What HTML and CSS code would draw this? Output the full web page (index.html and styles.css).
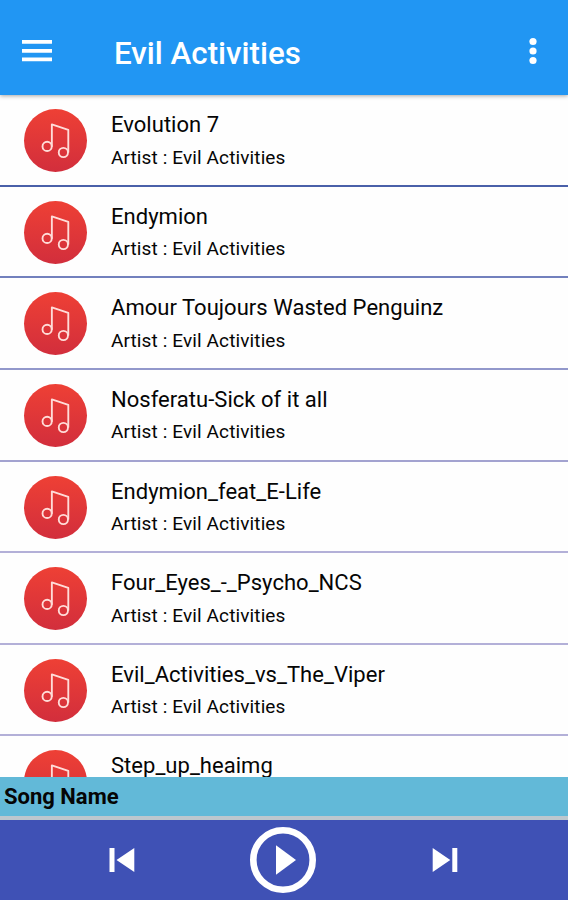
FILE: index.html
```html
<!DOCTYPE html>
<html lang="en">
<head>
    <meta charset="UTF-8">
    <meta name="viewport" content="width=device-width, initial-scale=1.0">
    <title>Evil Activities</title>
    <link rel="stylesheet" href="styles.css">
</head>
<body>
    <svg class="defs" width="0" height="0">
        <symbol id="note" viewBox="0 0 64 64">
            <g fill="none" stroke="#ffdcd8" stroke-width="1.9" stroke-linejoin="round">
                <circle cx="23.5" cy="38" r="4.7"/>
                <circle cx="40" cy="44.2" r="4.7"/>
                <path d="M28.3 38.3V15.6L45 21.3V44.2"/>
            </g>
        </symbol>
    </svg>
    <div class="app">
        <header class="toolbar">
            <svg class="menu" width="30" height="22" viewBox="0 0 30 22">
                <path d="M0 1.9h30M0 10.9h30M0 19.4h30" stroke="#fff" stroke-width="3.6"/>
            </svg>
            <h1>Evil Activities</h1>
            <svg class="more" width="8" height="28" viewBox="0 0 8 28" fill="#fff">
                <circle cx="4" cy="4.5" r="3.6"/>
                <circle cx="4" cy="14" r="3.6"/>
                <circle cx="4" cy="23.5" r="3.6"/>
            </svg>
        </header>
        <ul class="songs" id="songs"></ul>
        <div class="song-name">Song Name</div>
        <footer class="player">
            <svg class="prev" width="26" height="26" viewBox="0 0 26 26" fill="#fff">
                <path d="M0.5 1h5v24h-5zM25.3 1v24L7.5 13z"/>
            </svg>
            <svg class="play" width="68" height="68" viewBox="0 0 68 68">
                <circle cx="34" cy="34" r="29.7" fill="none" stroke="#fff" stroke-width="6.6"/>
                <path d="M27 19.2v29.6L47 34z" fill="#fff"/>
            </svg>
            <svg class="next" width="26" height="26" viewBox="0 0 26 26" fill="#fff">
                <path d="M20.3 1h5v24h-5zM0.7 1v24L18.3 13z"/>
            </svg>
        </footer>
    </div>
    <script>
        const songs = [
            'Evolution 7',
            'Endymion',
            'Amour Toujours Wasted Penguinz',
            'Nosferatu-Sick of it all',
            'Endymion_feat_E-Life',
            'Four_Eyes_-_Psycho_NCS',
            'Evil_Activities_vs_The_Viper',
            'Step_up_heaimg'
        ];
        document.getElementById('songs').innerHTML = songs.map((song, index) => `
            <li class="song">
                <svg class="cover"><use href="#note"/></svg>
                <div>
                    <div class="title">${song}</div>
                    ${index < songs.length - 1 ? '<div class="artist">Artist : Evil Activities</div>' : ''}
                </div>
            </li>
        `).join('');
    </script>
</body>
</html>
```
FILE: styles.css
```css
* {
    box-sizing: border-box;
}
body {
    margin: 0;
    font-family: Roboto, sans-serif;
    background: #fefefe;
    color: #050505;
}
.defs {
    display: none;
}
.app {
    display: flex;
    flex-direction: column;
    height: 900px;
    overflow: hidden;
}
.toolbar {
    display: flex;
    flex-shrink: 0;
    align-items: center;
    height: 95px;
    padding: 7px 31px 0 22px;
    background: #2196f3;
    box-shadow: 0 1px 4px rgba(0, 0, 0, 0.35);
    z-index: 1;
}
.menu {
    margin-top: -1px;
}
h1 {
    flex: 1;
    margin: 5px 0 0 62px;
    font-size: 31.3px;
    font-weight: 500;
    line-height: 36px;
    color: #fff;
}
.songs {
    flex: 1;
    min-height: 0;
    margin: 0;
    padding: 0;
    overflow: hidden;
    list-style: none;
}
.song {
    display: flex;
    height: 91.65px;
    padding: 14px 24px 0;
    border-bottom: 2px solid #b3b0d8;
}
.song:nth-child(1) {
    border-color: #4a60a9;
}
.song:nth-child(2) {
    border-color: #7280bd;
}
.song:nth-child(3) {
    border-color: #9298cb;
}
.song:nth-child(4) {
    border-color: #a3a3d0;
}
.cover {
    flex-shrink: 0;
    width: 63px;
    height: 63px;
    margin-right: 24px;
    border-radius: 50%;
    background: linear-gradient(#ee4035, #d22e3c);
}
.title {
    margin-top: 3px;
    font-size: 22px;
    line-height: 26px;
    letter-spacing: 0.03px;
    white-space: nowrap;
}
.artist {
    margin-top: 8.5px;
    font-size: 19px;
    line-height: 22px;
    letter-spacing: 0.12px;
}
.song-name {
    flex-shrink: 0;
    height: 43px;
    padding-left: 4px;
    border-bottom: 4px solid #bcc7ce;
    background: #62b9d8;
    font-size: 22px;
    font-weight: 700;
    line-height: 39px;
}
.player {
    display: flex;
    flex-shrink: 0;
    align-items: center;
    justify-content: space-between;
    height: 80px;
    padding: 0 110px 0 109px;
    background: #3f51b5;
}
.play {
    margin-right: 1px;
}
```
